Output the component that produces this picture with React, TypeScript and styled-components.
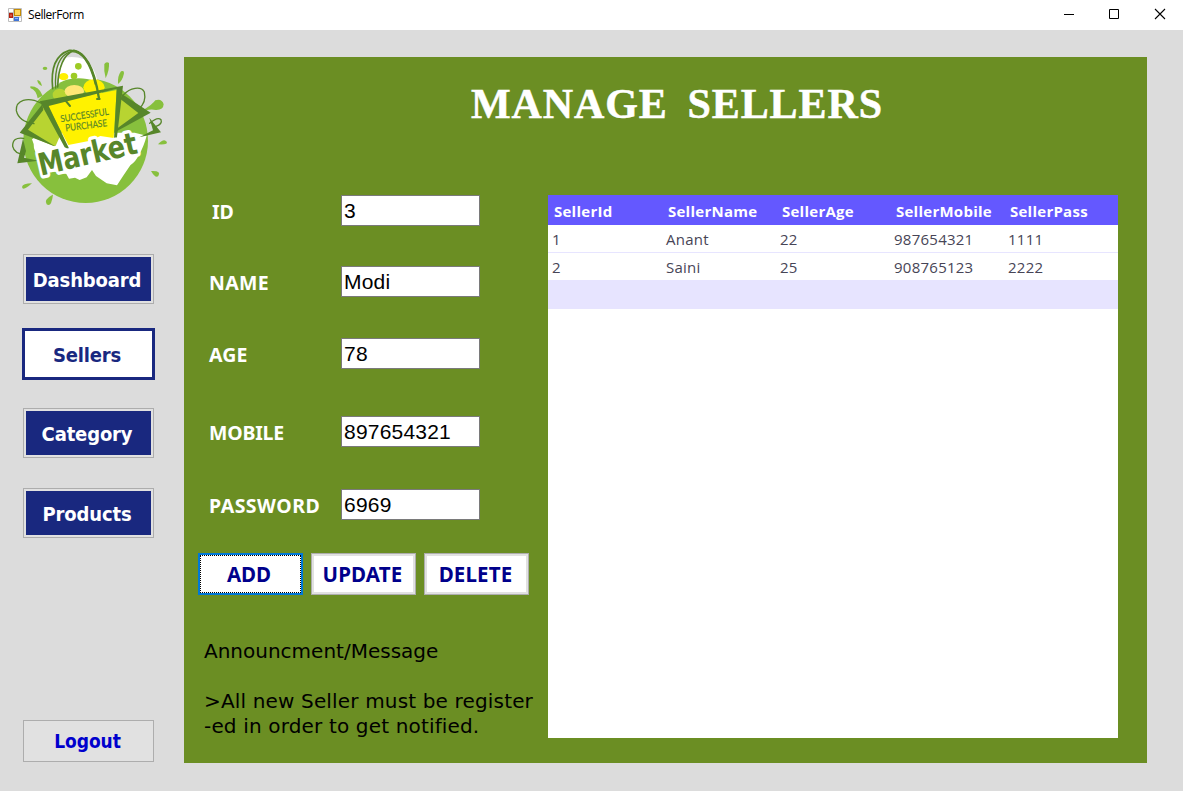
import React from 'react';
import styled, { createGlobalStyle } from 'styled-components';

const GlobalStyle = createGlobalStyle`
  * { box-sizing: border-box; }
  html, body { margin: 0; padding: 0; }
  body { overflow: hidden; background: #dcdcdc; }
  button, input { margin: 0; border-radius: 0; outline: none; }
`;

const Window = styled.div`
  display: flex;
  flex-direction: column;
  width: 1183px;
  height: 791px;
  background: #dcdcdc;
`;

const TitleBar = styled.header`
  display: flex;
  align-items: center;
  height: 30px;
  flex: none;
  background: #fff;
  padding-left: 8px;
`;

const TitleText = styled.span`
  margin-left: 6px;
  font: 12px/16px 'Open Sans', 'Noto Sans', sans-serif;
  letter-spacing: -0.45px;
  color: #000;
  flex: 1;
`;

const CaptionIcon = styled.svg<{ $width?: number }>`
  width: ${p => p.$width ?? 46}px;
  height: 30px;
  flex: none;
`;

const Body = styled.div`
  display: flex;
  height: 761px;
`;

const Sidebar = styled.nav`
  display: flex;
  flex-direction: column;
  width: 184px;
  flex: none;
  padding-top: 6px;
`;

const LogoArt = styled.svg`
  display: block;
  width: 184px;
  height: 180px;
  flex: none;
`;

const NavList = styled.div`
  display: flex;
  flex-direction: column;
  padding: 38px 0 0 22px;
`;

const NavButton = styled.button<{ $active?: boolean; $gap: number }>`
  flex: none;
  width: ${p => (p.$active ? 133 : 131)}px;
  height: ${p => (p.$active ? 52 : 50)}px;
  margin: 0 0 ${p => p.$gap}px ${p => (p.$active ? 0 : 1)}px;
  padding: 2px 3px 0 0;
  border: ${p => (p.$active ? '3px solid #19287f' : '1px solid #adadad')};
  box-shadow: ${p => (p.$active ? 'none' : 'inset 0 0 0 2px #e1e1e1')};
  background: ${p => (p.$active ? '#fff' : '#19287f')};
  color: ${p => (p.$active ? '#19287f' : '#fff')};
  font: bold 20px/24px 'DejaVu Sans Condensed', 'DejaVu Sans', sans-serif;
  font-stretch: condensed;
  letter-spacing: -0.15px;
  white-space: nowrap;
`;

const LogoutButton = styled.button`
  width: 131px;
  height: 42px;
  margin: auto 0 29px 23px;
  padding: 0 2px 0 0;
  border: 1px solid #adadad;
  background: #e1e1e1;
  color: #0000cd;
  font: bold 19px/24px 'DejaVu Sans Condensed', 'DejaVu Sans', sans-serif;
  font-stretch: condensed;
  letter-spacing: -0.05px;
`;

const Panel = styled.main`
  display: flex;
  flex-direction: column;
  width: 963px;
  height: 706px;
  margin-top: 27px;
  background: #6b8e23;
`;

const Heading = styled.h1`
  margin: 0;
  height: 138px;
  flex: none;
  padding: 23px 0 0 287px;
  color: #fff;
  font: bold 42px/48px 'Liberation Serif', serif;
  letter-spacing: 0.9px;
  word-spacing: -1.5px;
  -webkit-text-stroke: 0.5px #fff;
  white-space: pre;
`;

const Columns = styled.div`
  display: flex;
`;

const FormColumn = styled.section`
  width: 364px;
  flex: none;
`;

const Field = styled.label<{ $gap: number; $indent?: number }>`
  display: flex;
  align-items: center;
  height: 31px;
  margin-bottom: ${p => p.$gap}px;
  padding-left: ${p => 25 + (p.$indent ?? 0)}px;
`;

const FieldName = styled.span<{ $indent?: number; $spacing?: number }>`
  width: ${p => 132 - (p.$indent ?? 0)}px;
  padding-top: 3px;
  color: #fff;
  font: bold 19.5px/26px 'Noto Sans', sans-serif;
  letter-spacing: ${p => p.$spacing ?? 0}px;
  white-space: nowrap;
`;

const FieldInput = styled.input`
  width: 139px;
  height: 31px;
  border: 1px solid #7a7a7a;
  padding: 1px 0 0 2px;
  background: #fff;
  color: #000;
  font: 21px/24px 'Liberation Sans', sans-serif;
  letter-spacing: 0.2px;
`;

const ActionRow = styled.div`
  display: flex;
  gap: 8px;
  padding-left: 14px;
`;

const ActionButton = styled.button<{ $focused?: boolean }>`
  width: 105px;
  height: 42px;
  padding: ${p => (p.$focused ? 0 : '2px')};
  border: ${p => (p.$focused ? '2px solid #0078d7' : '1px solid #adadad')};
  box-shadow: ${p => (p.$focused ? 'none' : 'inset 0 0 0 2px #e1e1e1')};
  background: #fff;
  color: #00008b;
  font: bold 20.5px/26px 'Noto Sans', sans-serif;
`;

const FocusRing = styled.span`
  display: flex;
  align-items: center;
  justify-content: center;
  width: 100%;
  height: 38px;
  padding: 0 3px 1px 0;
  border: 1px dotted #000;
`;

const ButtonText = styled.span`
  display: block;
  padding: 0 2px 1px 0;
  letter-spacing: 0.15px;
`;

const Message = styled.div`
  margin: 44px 0 0 20px;
  color: #000;
  font: 20px/25px 'DejaVu Sans', sans-serif;
  font-variant-ligatures: none;
  white-space: pre;
`;

const MessageTitle = styled.p`
  margin: 0 0 25px;
`;

const MessageText = styled.p`
  margin: 0;
  letter-spacing: 0.16px;
`;

const Grid = styled.section`
  width: 570px;
  height: 543px;
  background: #fff;
`;

const GridRow = styled.div<{ $height: number; $line?: boolean }>`
  display: grid;
  grid-template-columns: repeat(5, 114px);
  align-items: center;
  height: ${p => p.$height}px;
  border-bottom: ${p => (p.$line ? '1px solid #e7e5ff' : 'none')};
  color: #474556;
  font: 15px/22px 'Open Sans', 'Noto Sans', sans-serif;
  letter-spacing: 0.25px;
`;

const HeaderRow = styled(GridRow)`
  background: #6458ff;
  color: #fff;
  font-weight: bold;
`;

const BlankRow = styled(GridRow)`
  background: #e7e4ff;
`;

const Cell = styled.span`
  padding: 1px 0 1px 4px;
`;

const HeaderCell = styled.span`
  padding: 2px 0 0 6px;
`;

const Logo = () => (
  <LogoArt viewBox="0 0 552 540">
    <g fill="#87c03d">
      <circle cx="257" cy="314" r="187" />
      <path d="M313 84q6-9 14-3q2 20-10 46q-6-22-4-43z" />
      <path d="M363 106q10-4 9 6q-4 22-18 32q-2-23 9-38z" />
      <path d="M92 151q25 0 36 28l-15 8q-5-25-21-30q-3-4 0-6z" />
      <path d="M112 132q10 0 14 18q-14-6-14-18z" />
      <path d="M430 222q28-17 36-29q20-6 25 12q-1 18-24 17q-14-4-32 2z" />
      <path d="M474 325q18-20 26-8q6 10-26 8z" />
      <path d="M453 405q32-2 22 15q-8 9-22-15z" />
      <path d="M96 442q-28 0-30 11q2 14 30-11z" />
      <path d="M158 476q-27 14-18 29q14 10 19-29z" />
      <ellipse cx="135" cy="97" rx="7" ry="5" />
    </g>
    <path d="M96 310l28-20l280 0l36 9q-9 34-24 59q-8 18-25 30q-22 32-40 60l-31-6l-32-22l-12-18l-16 22l-21 8l-14-7l-18 3l-8-14l-63-12l-15-38q-21-15-20-40z" fill="#fff" />
    <path d="M176 150V93q12-33 44-37q45 7 64 52l12 36l-58 22z" fill="#fff" />
    <path d="M178 69q38-34 74 0q-36-12-74 0z" fill="#d8d8db" />
    <ellipse cx="236" cy="154" rx="65" ry="27" fill="#87c03d" />
    <ellipse cx="191" cy="122" rx="14" ry="11" fill="#fff000" />
    <circle cx="222" cy="120" r="10" fill="#9dcb25" />
    <circle cx="235" cy="91" r="10" fill="#9dcb25" />
    <ellipse cx="179" cy="177" rx="21" ry="19" fill="#b8d431" />
    <ellipse cx="223" cy="166" rx="29" ry="19" fill="#ffe775" />
    <ellipse cx="282" cy="154" rx="32" ry="24" fill="#fff000" />
    <path d="M127 207L66 290L166 332L180 300L150 240z" fill="#b8d431" />
    <path d="M127 205L59 290L168 332L84 281L130 222z" fill="#57862a" />
    <path d="M363 170L440 230L348 286z" fill="#b8d431" />
    <path d="M366 174L452 230L350 286L352 277L415 231L362 190z" fill="#57862a" />
    <path d="M69 308L52 382L116 374L72 365L78 345zM448 245L483 289L418 304L459 283z" fill="#57862a" />
    <path d="M140 204L350 162L341 306L301 300L270 314L205 327z" fill="#fff200" />
    <path d="M119 196L369 149L350 311L342 309L350 158L146 210L209 341L194 334z" fill="#57862a" />
    <g fill="none" stroke="#57862a" strokeLinecap="round">
      <path d="M158 158Q148 62 208 43Q275 38 298 188" strokeWidth="5" />
      <path d="M167 156Q161 64 212 47Q260 43 286 145" strokeWidth="4" />
      <path d="M173 153Q176 62 222 43Q275 54 296 188" strokeWidth="5" />
      <path d="M196 193l14 17M291 189h8" strokeWidth="6" />
      <path d="M122 201C82 181 47 193 49 224Q57 258 102 263" strokeWidth="4" />
      <path d="M370 177C390 155 423 149 433 168Q440 199 416 219" strokeWidth="4" />
      <path d="M71 307Q37 302 38 331Q43 353 73 355" strokeWidth="4" />
      <path d="M449 262Q473 241 483 251Q488 264 468 271" strokeWidth="4" />
    </g>
    <g fontFamily="Lato, sans-serif" fontWeight="400" fill="#57862a" stroke="#57862a" strokeWidth="0.5">
      <text transform="translate(183 259) rotate(-9)" fontSize="29" textLength="146" lengthAdjust="spacingAndGlyphs">SUCCESSFUL</text>
      <text transform="translate(197 286) rotate(-7)" fontSize="29" textLength="126" lengthAdjust="spacingAndGlyphs">PURCHASE</text>
    </g>
    <text
      transform="translate(122 419) rotate(-13)"
      fontFamily="'DejaVu Sans', sans-serif"
      fontWeight="700"
      fontSize="92"
      textLength="302"
      lengthAdjust="spacingAndGlyphs"
      fill="#57862a"
      stroke="#fff"
      strokeWidth="20"
      strokeLinejoin="round"
      paintOrder="stroke"
    >
      Market
    </text>
  </LogoArt>
);

const FormIcon = () => (
  <svg width="14" height="14" viewBox="0 0 14 14">
    <path d="M.5.5h13v13H.5zM.5 4.500h5M5.500.5v13M5.500 9h8" fill="#fff" stroke="#bdbdbd" />
    <rect x="1" y="5" width="4" height="5" fill="#b3200f" />
    <rect x="2" y="6.500" width="2" height="2" fill="#e2614c" />
    <rect x="6" y="1" width="7" height="7" fill="#c48c06" />
    <rect x="7" y="2" width="5" height="5" fill="#ffd65a" />
    <rect x="6" y="9" width="5" height="4" fill="#3f74d8" />
    <rect x="7" y="10" width="3" height="1" fill="#8fb6f5" />
  </svg>
);

const fields = [
  { name: 'ID', value: '3', gap: 40, indent: 3 },
  { name: 'NAME', value: 'Modi', gap: 41, spacing: 0.3 },
  { name: 'AGE', value: '78', gap: 47, spacing: 0.2 },
  { name: 'MOBILE', value: '897654321', gap: 42, spacing: -0.2 },
  { name: 'PASSWORD', value: '6969', gap: 33, spacing: 0.5 },
];

const columns = ['SellerId', 'SellerName', 'SellerAge', 'SellerMobile', 'SellerPass'];
const rows = [
  ['1', 'Anant', '22', '987654321', '1111'],
  ['2', 'Saini', '25', '908765123', '2222'],
];

export default function App() {
  return (
    <>
      <GlobalStyle />
      <Window>
        <TitleBar>
          <FormIcon />
          <TitleText>SellerForm</TitleText>
          <CaptionIcon $width={45} viewBox="0 0 45 30">
            <path d="M18 14.500h10" stroke="#000" />
          </CaptionIcon>
          <CaptionIcon viewBox="0 0 46 30">
            <path d="M18.500 9.500h9v9h-9z" fill="none" stroke="#000" />
          </CaptionIcon>
          <CaptionIcon viewBox="0 0 46 30">
            <path d="M18 9l10 10M28 9l-10 10" stroke="#000" strokeWidth="1.100" />
          </CaptionIcon>
        </TitleBar>
        <Body>
          <Sidebar>
            <Logo />
            <NavList>
              <NavButton $gap={24}>Dashboard</NavButton>
              <NavButton $active $gap={28}>Sellers</NavButton>
              <NavButton $gap={30}>Category</NavButton>
              <NavButton $gap={0}>Products</NavButton>
            </NavList>
            <LogoutButton>Logout</LogoutButton>
          </Sidebar>
          <Panel>
            <Heading>{'MANAGE  SELLERS'}</Heading>
            <Columns>
              <FormColumn>
                {fields.map(f => (
                  <Field key={f.name} $gap={f.gap} $indent={f.indent}>
                    <FieldName $indent={f.indent} $spacing={f.spacing}>{f.name}</FieldName>
                    <FieldInput defaultValue={f.value} />
                  </Field>
                ))}
                <ActionRow>
                  <ActionButton $focused>
                    <FocusRing>ADD</FocusRing>
                  </ActionButton>
                  <ActionButton>
                    <ButtonText>UPDATE</ButtonText>
                  </ActionButton>
                  <ActionButton>
                    <ButtonText>DELETE</ButtonText>
                  </ActionButton>
                </ActionRow>
                <Message>
                  <MessageTitle>Announcment/Message</MessageTitle>
                  <MessageText>{'>All new Seller must be register\n-ed in order to get notified.'}</MessageText>
                </Message>
              </FormColumn>
              <Grid>
                <HeaderRow $height={30}>
                  {columns.map(c => (
                    <HeaderCell key={c}>{c}</HeaderCell>
                  ))}
                </HeaderRow>
                {rows.map((r, i) => (
                  <GridRow key={r[0]} $height={i === 0 ? 28 : 27} $line={i === 0}>
                    {r.map((v, j) => (
                      <Cell key={j}>{v}</Cell>
                    ))}
                  </GridRow>
                ))}
                <BlankRow $height={29} />
              </Grid>
            </Columns>
          </Panel>
        </Body>
      </Window>
    </>
  );
}
